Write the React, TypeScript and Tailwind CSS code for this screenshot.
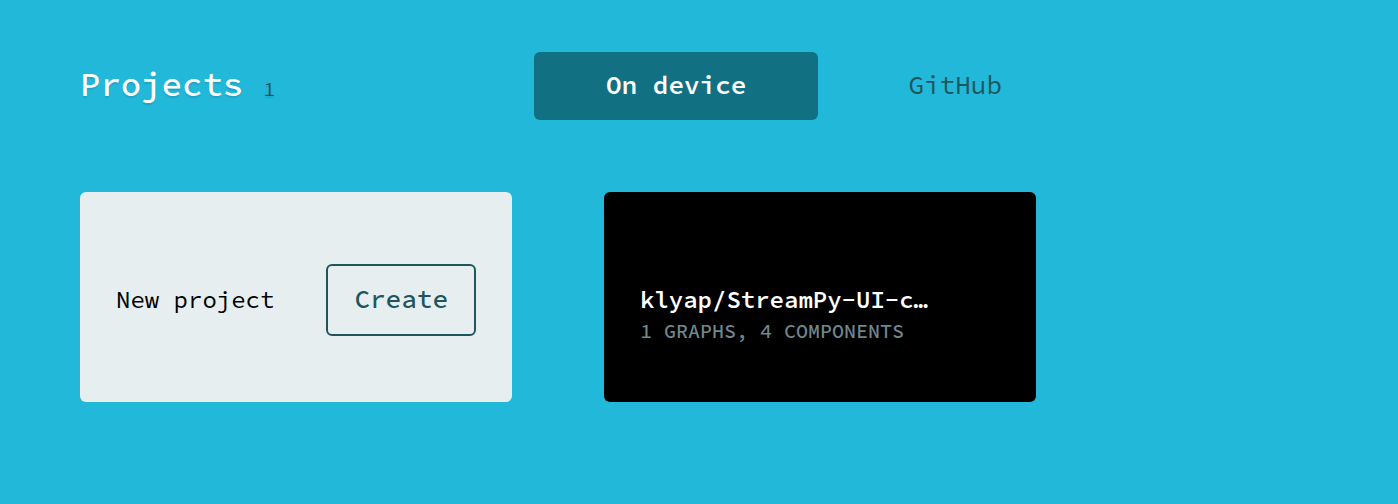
const tabBase = "h-[68px] rounded-md px-[72px] pb-0.5 text-[26px] leading-8 whitespace-nowrap";

export default function App() {
  return (
    <main className="min-h-screen bg-[#22b8d9] px-20 py-[52px] font-['Source_Code_Pro','Liberation_Mono',monospace]">
      <header className="flex flex-wrap items-center">
        <h1 className="flex shrink-0 basis-[454px] items-baseline gap-5 pb-1 text-[34px] leading-10 font-medium text-white [text-shadow:0_2px_1px_rgba(0,0,0,0.1)]">
          Projects
          <span className="text-xl font-normal text-[#20555e]">1</span>
        </h1>
        <nav aria-label="Project source" className="flex flex-wrap gap-[18px]">
          <button type="button" aria-pressed="true" className={`${tabBase} bg-[#127083] font-semibold text-white`}>
            On device
          </button>
          <button type="button" aria-pressed="false" className={`${tabBase} text-[#20555e]`}>
            GitHub
          </button>
        </nav>
      </header>

      <section aria-label="Projects on device" className="mt-[72px] flex flex-wrap gap-[92px]">
        <div className="flex min-h-[210px] w-[432px] max-w-full items-center justify-between rounded-md bg-[#e6eef0] px-9 pt-1.5">
          <h2 className="text-2xl text-black">New project</h2>
          <button
            type="button"
            className="h-[72px] rounded-md border-2 border-[#20555e] px-[26px] pb-0.5 text-[26px] leading-8 font-medium text-[#20555e]"
          >
            Create
          </button>
        </div>
        <a
          href="#klyap-streampy"
          className="flex min-h-[210px] w-[432px] max-w-full flex-col justify-end rounded-md bg-black px-9 pb-14"
        >
          <span className="truncate text-2xl leading-8 font-semibold text-white">klyap/StreamPy-UI-c…</span>
          <span className="text-xl leading-[30px] font-medium text-[#70878c] uppercase">1 graphs, 4 components</span>
        </a>
      </section>
    </main>
  );
}
